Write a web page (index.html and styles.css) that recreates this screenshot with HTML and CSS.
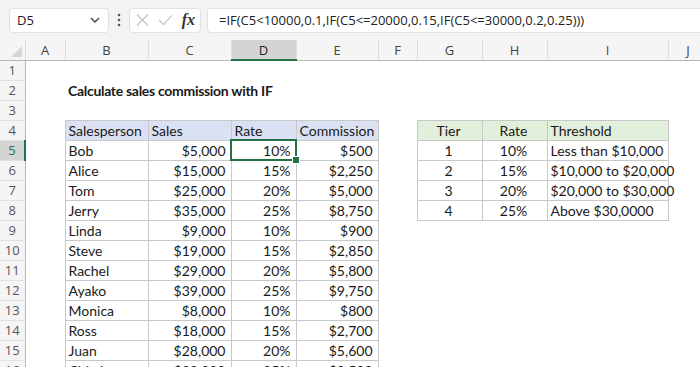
FILE: index.html
```html
<!DOCTYPE html>
<html lang="en">
<head>
  <meta charset="UTF-8">
  <title>Calculate sales commission with IF</title>
  <link rel="stylesheet" href="styles.css">
</head>
<body>

  <div class="formula-bar">
    <div class="name-box">
      <span>D5</span>
      <svg class="chevron" width="12" height="8" viewBox="0 0 12 8"><path d="M2 2 L6 6 L10 2" fill="none" stroke="#444" stroke-width="1.4"/></svg>
    </div>
    <svg class="dots" width="4" height="14" viewBox="0 0 4 14"><circle cx="2" cy="2" r="1.3" fill="#555"/><circle cx="2" cy="7" r="1.3" fill="#555"/><circle cx="2" cy="12" r="1.3" fill="#555"/></svg>
    <div class="fx-box">
      <svg width="14" height="14" viewBox="0 0 14 14"><path d="M1 1 L13 13 M13 1 L1 13" stroke="#c4c4c4" stroke-width="1.3"/></svg>
      <svg width="16" height="14" viewBox="0 0 16 14"><path d="M1 7 L6 12 L15 2" fill="none" stroke="#c4c4c4" stroke-width="1.3"/></svg>
      <span class="fx">fx</span>
    </div>
    <div class="formula">=IF(C5&lt;10000,0.1,IF(C5&lt;=20000,0.15,IF(C5&lt;=30000,0.2,0.25)))</div>
  </div>

  <table class="sheet">
    <colgroup>
      <col style="width:25px"><col style="width:40px"><col style="width:83px"><col style="width:83px">
      <col style="width:65px"><col style="width:82px"><col style="width:39px"><col style="width:65px">
      <col style="width:65px"><col style="width:121px"><col style="width:40px">
    </colgroup>
    <thead>
      <tr>
        <th class="corner"><span class="tri"></span></th>
        <th>A</th><th>B</th><th>C</th><th class="sel-col">D</th><th>E</th><th>F</th><th>G</th><th>H</th><th>I</th><th>J</th>
      </tr>
    </thead>
    <tbody>
      <tr><th>1</th><td></td><td></td><td></td><td></td><td></td><td></td><td></td><td></td><td></td><td></td></tr>
      <tr><th>2</th><td></td><td class="title">Calculate sales commission with IF</td><td></td><td></td><td></td><td></td><td></td><td></td><td></td><td></td></tr>
      <tr><th>3</th><td></td><td></td><td></td><td></td><td></td><td></td><td></td><td></td><td></td><td></td></tr>
      <tr><th>4</th><td></td><td class="b hd-blue">Salesperson</td><td class="b hd-blue">Sales</td><td class="b hd-blue">Rate</td><td class="b hd-blue">Commission</td><td></td><td class="b hd-green c">Tier</td><td class="b hd-green c">Rate</td><td class="b hd-green">Threshold</td><td></td></tr>
      <tr><th class="sel-row">5</th><td></td><td class="b">Bob</td><td class="b r">$5,000</td><td class="b r active">10%<span class="handle"></span></td><td class="b r">$500</td><td></td><td class="b c">1</td><td class="b c">10%</td><td class="b">Less than $10,000</td><td></td></tr>
      <tr><th>6</th><td></td><td class="b">Alice</td><td class="b r">$15,000</td><td class="b r">15%</td><td class="b r">$2,250</td><td></td><td class="b c">2</td><td class="b c">15%</td><td class="b">$10,000 to $20,000</td><td></td></tr>
      <tr><th>7</th><td></td><td class="b">Tom</td><td class="b r">$25,000</td><td class="b r">20%</td><td class="b r">$5,000</td><td></td><td class="b c">3</td><td class="b c">20%</td><td class="b">$20,000 to $30,000</td><td></td></tr>
      <tr><th>8</th><td></td><td class="b">Jerry</td><td class="b r">$35,000</td><td class="b r">25%</td><td class="b r">$8,750</td><td></td><td class="b c">4</td><td class="b c">25%</td><td class="b">Above $30,0000</td><td></td></tr>
      <tr><th>9</th><td></td><td class="b">Linda</td><td class="b r">$9,000</td><td class="b r">10%</td><td class="b r">$900</td><td></td><td></td><td></td><td></td><td></td></tr>
      <tr><th>10</th><td></td><td class="b">Steve</td><td class="b r">$19,000</td><td class="b r">15%</td><td class="b r">$2,850</td><td></td><td></td><td></td><td></td><td></td></tr>
      <tr><th>11</th><td></td><td class="b">Rachel</td><td class="b r">$29,000</td><td class="b r">20%</td><td class="b r">$5,800</td><td></td><td></td><td></td><td></td><td></td></tr>
      <tr><th>12</th><td></td><td class="b">Ayako</td><td class="b r">$39,000</td><td class="b r">25%</td><td class="b r">$9,750</td><td></td><td></td><td></td><td></td><td></td></tr>
      <tr><th>13</th><td></td><td class="b">Monica</td><td class="b r">$8,000</td><td class="b r">10%</td><td class="b r">$800</td><td></td><td></td><td></td><td></td><td></td></tr>
      <tr><th>14</th><td></td><td class="b">Ross</td><td class="b r">$18,000</td><td class="b r">15%</td><td class="b r">$2,700</td><td></td><td></td><td></td><td></td><td></td></tr>
      <tr><th>15</th><td></td><td class="b">Juan</td><td class="b r">$28,000</td><td class="b r">20%</td><td class="b r">$5,600</td><td></td><td></td><td></td><td></td><td></td></tr>
      <tr><th>16</th><td></td><td class="b">Chloé</td><td class="b r">$38,000</td><td class="b r">25%</td><td class="b r">$9,500</td><td></td><td></td><td></td><td></td><td></td></tr>
    </tbody>
  </table>

</body>
</html>
```

FILE: styles.css
```css
body {
  margin: 0;
  padding: 0;
  background: #fff;
  overflow: hidden;
  font-family: Lato, "Liberation Sans", Arial, sans-serif;
  color: #1a1a1a;
}

/* formula bar */
.formula-bar {
  display: flex;
  align-items: center;
  height: 40px;
  padding: 0 0 0 9px;
  background: #f3f3f3;
  box-sizing: border-box;
  font-family: "Open Sans", "Noto Sans", sans-serif;
  font-size: 13px;
  color: #222;
}

.name-box {
  display: flex;
  align-items: center;
  justify-content: space-between;
  width: 100px;
  height: 25px;
  padding: 0 7px 0 7px;
  box-sizing: border-box;
  background: #fff;
  border: 1px solid #e1e1e1;
  border-radius: 4px;
}

.dots {
  margin: 0 8px 0 8px;
}

.fx-box {
  display: flex;
  align-items: center;
  gap: 9px;
  width: 72px;
  height: 25px;
  padding: 0 5px 0 6px;
  box-sizing: border-box;
  background: #fff;
  border: 1px solid #e1e1e1;
  border-radius: 4px;
}

.fx {
  font-family: "Liberation Serif", serif;
  font-style: italic;
  font-weight: bold;
  font-size: 16px;
  color: #333;
}

.formula {
  flex: 1;
  height: 25px;
  margin-left: 6px;
  padding-left: 11px;
  line-height: 23px;
  background: #fff;
  border: 1px solid #e1e1e1;
  border-right: none;
  border-radius: 4px 0 0 4px;
  box-sizing: border-box;
  white-space: nowrap;
}

/* grid */
.sheet {
  border-collapse: collapse;
  table-layout: fixed;
  width: 708px;
  font-size: 14px;
}

.sheet tr {
  height: 20px;
}

.sheet td {
  padding: 0 5px 0 3px;
  height: 19px;
  white-space: nowrap;
  overflow: visible;
  line-height: 19px;
}

.sheet thead th {
  height: 19px;
  background: #f5f5f5;
  border-bottom: 1px solid #b7b7b7;
  border-right: 1px solid #dedede;
  font-family: "Open Sans", "Noto Sans", sans-serif;
  font-weight: normal;
  font-size: 13px;
  color: #444;
  padding: 0;
}

.sheet thead th.sel-col {
  background: #d4d4d4;
  border-bottom: 2px solid #217346;
  color: #222;
}

.sheet thead th.corner {
  position: relative;
}

.tri {
  position: absolute;
  right: 3px;
  bottom: 3px;
  width: 0;
  height: 0;
  border-left: 11px solid transparent;
  border-bottom: 11px solid #d6d6d6;
}

.sheet tbody th {
  background: #f5f5f5;
  border-right: 1px solid #b7b7b7;
  border-bottom: 1px solid #e2e2e2;
  font-family: "Open Sans", "Noto Sans", sans-serif;
  font-weight: normal;
  font-size: 13px;
  color: #555;
  padding: 0;
}

.sheet tbody th.sel-row {
  background: #d4d4d4;
  border-right: 2px solid #217346;
  color: #217346;
}

.title {
  font-weight: bold;
  letter-spacing: -0.3px;
  overflow: visible;
}

.b {
  border: 1px solid #c8c8c8;
}

.r {
  text-align: right;
}

.c {
  text-align: center;
}

.hd-blue {
  background: #d9e1f2;
}

.hd-green {
  background: #e2efda;
}

.active {
  position: relative;
  outline: 2px solid #217346;
  outline-offset: -1px;
}

.handle {
  position: absolute;
  right: -4px;
  bottom: -4px;
  width: 6px;
  height: 6px;
  background: #217346;
  border: 1px solid #fff;
}
```
